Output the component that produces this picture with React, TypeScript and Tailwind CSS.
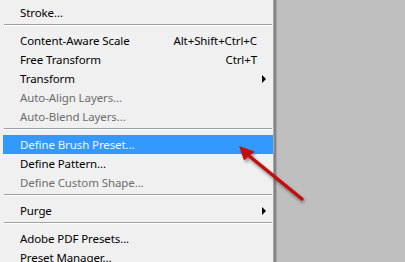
import React from "react";

type Item =
  | { type: "item"; label: string; shortcut?: string; sub?: boolean; disabled?: boolean; active?: boolean }
  | { type: "sep" };

const items: Item[] = [
  { type: "item", label: "Stroke..." },
  { type: "sep" },
  { type: "item", label: "Content-Aware Scale", shortcut: "Alt+Shift+Ctrl+C" },
  { type: "item", label: "Free Transform", shortcut: "Ctrl+T" },
  { type: "item", label: "Transform", sub: true },
  { type: "item", label: "Auto-Align Layers...", disabled: true },
  { type: "item", label: "Auto-Blend Layers...", disabled: true },
  { type: "sep" },
  { type: "item", label: "Define Brush Preset...", active: true },
  { type: "item", label: "Define Pattern..." },
  { type: "item", label: "Define Custom Shape...", disabled: true },
  { type: "sep" },
  { type: "item", label: "Purge", sub: true },
  { type: "sep" },
  { type: "item", label: "Adobe PDF Presets..." },
  { type: "item", label: "Preset Manager..." },
];

function SubArrow() {
  return (
    <svg width="5" height="8" viewBox="0 0 5 8" className="absolute right-[6px] top-[6px]">
      <path d="M0 0 L4 4 L0 8 Z" fill="#000" />
    </svg>
  );
}

export default function App() {
  return (
    <div
      className="relative w-[405px] h-[262px] overflow-hidden bg-[#bfbfbf] flex"
      style={{ fontFamily: '"Noto Sans", "Open Sans", sans-serif' }}
    >
      <div className="w-[273px] h-full bg-[#f0f0f0] pt-[3px] flex flex-col shrink-0">
        {items.map((it, i) =>
          it.type === "sep" ? (
            <div key={i} className="h-[9px] shrink-0 pt-[2px] pl-[4px] pr-[1px]">
              <div className="h-px bg-[#a0a0a0]" />
              <div className="h-px bg-white" />
            </div>
          ) : (
            <div
              key={i}
              className={
                "relative ml-[3px] h-[19px] shrink-0 flex items-center pl-[17px] pr-[16px] text-[11.5px] tracking-[-0.1px] leading-none " +
                (it.active ? "bg-[#3399ff] text-[#eef5ff]" : it.disabled ? "text-[#6d6d6d]" : "text-[#000]")
              }
            >
              <span className="flex-1 whitespace-nowrap">{it.label}</span>
              {it.shortcut && <span className="whitespace-nowrap">{it.shortcut}</span>}
              {it.sub && <SubArrow />}
            </div>
          )
        )}
      </div>
      <div className="w-px h-full bg-[#a8a8a8] shrink-0" />
      <div className="w-[2px] h-full bg-[#858585] shrink-0" />
      <div className="w-px h-full bg-[#a5a5a5] shrink-0" />

      <svg className="absolute left-0 top-0 pointer-events-none" width="405" height="262" viewBox="0 0 405 262">
        <defs>
          <filter id="sh" x="-20%" y="-20%" width="140%" height="140%">
            <feGaussianBlur stdDeviation="1.5" />
          </filter>
        </defs>
        <g transform="translate(2,3)" opacity="0.45" filter="url(#sh)">
          <line x1="302" y1="199" x2="248" y2="155" stroke="#333" strokeWidth="4" />
          <path d="M239 146 L244 160 L254 151 Z" fill="#333" />
        </g>
        <line x1="302" y1="199" x2="248" y2="155" stroke="#c40d0d" strokeWidth="3.5" strokeLinecap="round" />
        <path d="M239 146 L244 160.5 L254.5 151.5 Z" fill="#c40d0d" />
      </svg>
    </div>
  );
}
